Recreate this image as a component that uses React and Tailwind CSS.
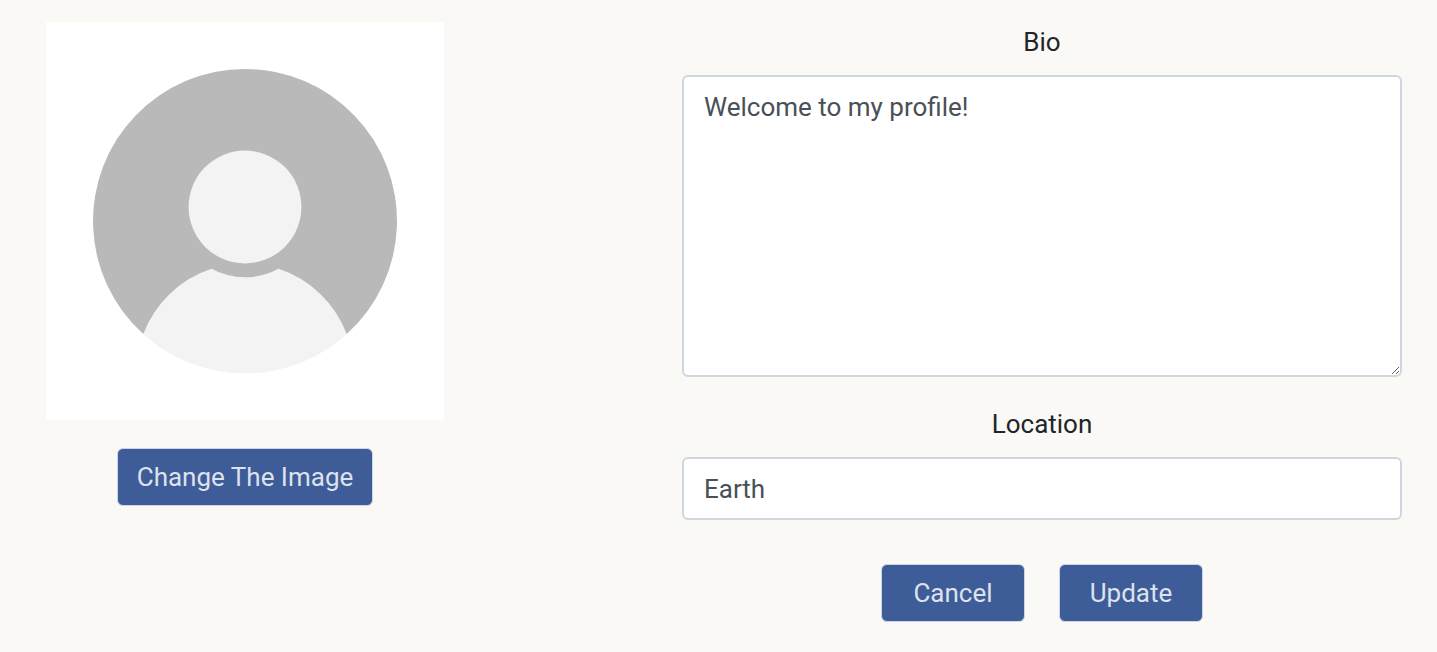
function Avatar() {
  return (
    <svg viewBox="0 0 398 398" className="block w-[398px] max-w-full bg-white" role="img" aria-label="Profile">
      <circle cx="199" cy="199.5" r="151.8" fill="#f3f3f3" />
      <path
        fill="#b9b9b9"
        d="M97.3 312 A152 152 0 1 1 300.7 312 A109 109 0 0 0 232.5 246.8 A70.3 70.3 0 0 1 165.5 246.8 A109 109 0 0 0 97.3 312 Z"
      />
      <circle cx="199" cy="185" r="56.4" fill="#f3f3f3" />
    </svg>
  );
}

function Button({ children, className }) {
  return (
    <button
      type="button"
      className={`h-[58px] rounded-md border border-[#ccd5e8] bg-[#3d5c98] text-[#dde2ed] ${className}`}
    >
      {children}
    </button>
  );
}

const field =
  "block w-full rounded-md border-2 border-[#d0d6dd] bg-white px-5 text-[#495057] outline-none";

export default function App() {
  return (
    <main className="flex min-h-screen items-start gap-[238px] bg-[#faf9f6] pt-[22px] pr-[35px] pb-[30px] pl-[46px] font-['Roboto',sans-serif] text-[26px] leading-10 text-[#212529]">
      <section className="flex flex-col items-center gap-7">
        <Avatar />
        <Button className="px-[19px]">Change The Image</Button>
      </section>
      <form className="min-w-0 flex-1">
        <label htmlFor="bio" className="mb-[13px] block text-center">
          Bio
        </label>
        <textarea
          id="bio"
          defaultValue="Welcome to my profile!"
          className={`${field} h-[302px] resize-y py-[10px]`}
        />
        <label htmlFor="location" className="mt-[27px] mb-[13px] block text-center">
          Location
        </label>
        <input id="location" type="text" defaultValue="Earth" className={`${field} h-[63px]`} />
        <div className="mt-[44px] flex justify-center gap-[34px]">
          <Button className="w-[144px]">Cancel</Button>
          <Button className="w-[144px]">Update</Button>
        </div>
      </form>
    </main>
  );
}
